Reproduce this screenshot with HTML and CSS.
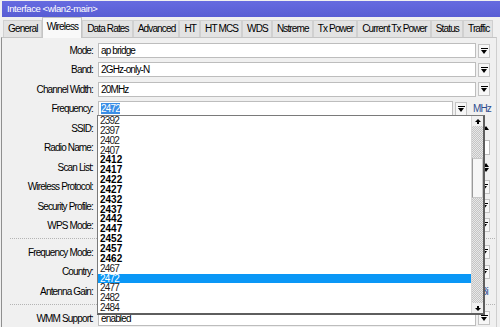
FILE: index.html
```html
<!DOCTYPE html>
<html lang="en">
<head>
    <meta charset="UTF-8">
    <meta name="viewport" content="width=device-width, initial-scale=1.0">
    <title>Interface &lt;wlan2-main&gt;</title>
    <link rel="stylesheet" href="styles.css">
</head>
<body>
    <div class="window">
        <div class="titlebar">Interface &lt;wlan2-main&gt;</div>

        <div class="tabs">
            <div class="tab">General</div>
            <div class="tab active">Wireless</div>
            <div class="tab">Data Rates</div>
            <div class="tab">Advanced</div>
            <div class="tab">HT</div>
            <div class="tab">HT MCS</div>
            <div class="tab">WDS</div>
            <div class="tab">Nstreme</div>
            <div class="tab">Tx Power</div>
            <div class="tab">Current Tx Power</div>
            <div class="tab">Status</div>
            <div class="tab">Traffic</div>
        </div>

        <div class="panel">
            <div class="form">
                <div class="row">
                    <span class="label">Mode:</span>
                    <div class="box">ap bridge</div>
                    <span class="btn drop"></span>
                </div>
                <div class="row">
                    <span class="label">Band:</span>
                    <div class="box">2GHz-only-N</div>
                    <span class="btn drop"></span>
                </div>
                <div class="row">
                    <span class="label">Channel Width:</span>
                    <div class="box">20MHz</div>
                    <span class="btn drop"></span>
                </div>
                <div class="row">
                    <span class="label">Frequency:</span>
                    <div class="box"><span class="sel">2472</span></div>
                    <span class="btn drop"></span>
                    <span class="unit wide">MHz</span>
                </div>
                <div class="row">
                    <span class="label">SSID:</span>
                    <div class="box"></div>
                    <span class="icon up-only"></span>
                </div>
                <div class="row">
                    <span class="label">Radio Name:</span>
                    <div class="box"></div>
                </div>
                <div class="row">
                    <span class="label">Scan List:</span>
                    <div class="box"></div>
                    <span class="icon updown"></span>
                </div>
                <div class="row">
                    <span class="label">Wireless Protocol:</span>
                    <div class="box"></div>
                    <span class="btn drop"></span>
                </div>
                <div class="row">
                    <span class="label">Security Profile:</span>
                    <div class="box"></div>
                    <span class="btn drop"></span>
                </div>
                <div class="row">
                    <span class="label">WPS Mode:</span>
                    <div class="box"></div>
                    <span class="btn drop"></span>
                </div>

                <div class="separator"></div>

                <div class="row">
                    <span class="label">Frequency Mode:</span>
                    <div class="box"></div>
                    <span class="btn drop"></span>
                </div>
                <div class="row">
                    <span class="label">Country:</span>
                    <div class="box"></div>
                    <span class="btn drop"></span>
                </div>
                <div class="row">
                    <span class="label">Antenna Gain:</span>
                    <div class="box"></div>
                    <span class="unit">dBi</span>
                </div>

                <div class="separator"></div>

                <div class="row">
                    <span class="label">WMM Support:</span>
                    <div class="box">enabled</div>
                    <span class="btn drop"></span>
                </div>
            </div>

            <!-- open frequency list -->
            <div class="freq-list">
                <div class="items">
                    <div class="item">2392</div>
                    <div class="item">2397</div>
                    <div class="item">2402</div>
                    <div class="item">2407</div>
                    <div class="item bold">2412</div>
                    <div class="item bold">2417</div>
                    <div class="item bold">2422</div>
                    <div class="item bold">2427</div>
                    <div class="item bold">2432</div>
                    <div class="item bold">2437</div>
                    <div class="item bold">2442</div>
                    <div class="item bold">2447</div>
                    <div class="item bold">2452</div>
                    <div class="item bold">2457</div>
                    <div class="item bold">2462</div>
                    <div class="item">2467</div>
                    <div class="item selected">2472</div>
                    <div class="item">2477</div>
                    <div class="item">2482</div>
                    <div class="item">2484</div>
                </div>
                <div class="scrollbar">
                    <div class="sb-btn sb-up"></div>
                    <div class="sb-track">
                        <div class="sb-thumb"></div>
                    </div>
                    <div class="sb-btn sb-down"></div>
                </div>
            </div>
        </div>
    </div>
</body>
</html>
```

FILE: styles.css
```css
body {
    margin: 0;
    background: #f0f0f0;
    font-family: "Liberation Sans", Arial, sans-serif;
    font-size: 10px;
    letter-spacing: -0.85px;
    color: #000;
}
.window {
    width: 500px;
    height: 327px;
    overflow: hidden;
    padding-left: 1px;
    box-sizing: border-box;
}
.titlebar {
    margin: 1px 0 0 1px;
    height: 16px;
    line-height: 16px;
    padding-left: 5px;
    background: linear-gradient(#666be0, #585dd4);
    color: #fff;
    font-size: 9.5px;
    letter-spacing: -0.4px;
}

/* tabs */
.tabs {
    display: flex;
    align-items: flex-end;
    height: 20px;
    padding-left: 2px;
}
.tab {
    height: 16px;
    line-height: 16px;
    padding: 0 3px 0 4px;
    background: #e3e3e3;
    border: 1px solid #d0d0d0;
    border-bottom: none;
    white-space: nowrap;
}
.tab.active {
    height: 20px;
    line-height: 18px;
    margin-bottom: -1px;
    background: #f9f9f9;
    border-color: #c4c4c4;
    position: relative;
    z-index: 1;
}

/* panel */
.panel {
    position: relative;
    margin-right: 3px;
    height: 300px;
    border-top: 1px solid #c4c4c4;
    border-left: 1px solid #8f8f8f;
    border-right: 1px solid #cfcfcf;
    padding-right: 6px;
}
.form {
    display: flex;
    flex-direction: column;
    gap: 4.45px;
    padding-top: 5px;
}
.row {
    display: flex;
    align-items: center;
    height: 15px;
}
.label {
    width: 91px;
    margin-right: 5px;
    text-align: right;
    white-space: nowrap;
}
.box {
    flex: 1;
    height: 15px;
    line-height: 13px;
    padding-left: 2px;
    box-sizing: border-box;
    background: #fff;
    border: 1px solid #bdbdbd;
}
.sel {
    background: #3a8ee6;
    color: #fff;
}
.btn {
    width: 12px;
    height: 14px;
    margin-left: 2px;
    box-sizing: border-box;
    background: #f7f7f7;
    border: 1px solid #c4c4c4;
}
.drop {
    display: flex;
    flex-direction: column;
    align-items: center;
    justify-content: center;
}
.drop::before {
    content: "";
    width: 7px;
    height: 1px;
    background: #000;
}
.drop::after {
    content: "";
    margin-top: 1px;
    border-left: 3.5px solid transparent;
    border-right: 3.5px solid transparent;
    border-top: 4px solid #000;
}
.unit {
    width: 16px;
    margin-left: 2px;
    padding-left: 2px;
    box-sizing: border-box;
    color: #2d4d8f;
    white-space: nowrap;
}
.unit.wide {
    width: 22px;
    margin-left: 1px;
    padding-left: 5px;
}
.icon {
    width: 12px;
    margin-left: 2px;
    display: flex;
    flex-direction: column;
    align-items: center;
    justify-content: center;
    padding-left: 4px;
    box-sizing: border-box;
}
.up-only::before,
.updown::before {
    content: "";
    border-left: 3.5px solid transparent;
    border-right: 3.5px solid transparent;
    border-bottom: 4px solid #000;
}
.updown::after {
    content: "";
    margin-top: 1px;
    border-left: 3.5px solid transparent;
    border-right: 3.5px solid transparent;
    border-top: 4px solid #000;
}
.separator {
    height: 0;
    margin: 1px -5px 1px 8px;
    border-top: 1px dotted #b4b4b4;
}

/* dropdown list */
.freq-list {
    position: absolute;
    top: 77px;
    left: 95px;
    width: 385px;
    height: 197px;
    display: flex;
    background: #fff;
    border-top: 1px solid #7a7a7a;
    border-left: 1px solid #7a7a7a;
    border-right: 2px solid #5e5e5e;
    border-bottom: 2px solid #5e5e5e;
}
.items {
    flex: 1;
}
.item {
    height: 9.85px;
    line-height: 10px;
    padding-left: 2px;
    color: #222;
}
.item.bold {
    font-weight: bold;
    letter-spacing: 0;
    color: #000;
}
.item.selected {
    background: #0a97f6;
    color: #fff;
}
.scrollbar {
    width: 12px;
    display: flex;
    flex-direction: column;
    border-left: 1px solid #d6d6d6;
    box-sizing: border-box;
}
.sb-btn {
    height: 10px;
    background: #f0f0f0;
    display: flex;
    flex-direction: column;
    align-items: center;
    justify-content: center;
}
.sb-up::before {
    content: "";
    border-left: 3px solid transparent;
    border-right: 3px solid transparent;
    border-bottom: 3px solid #000;
}
.sb-up::after {
    content: "";
    width: 2px;
    height: 2px;
    background: #000;
}
.sb-down::before {
    content: "";
    width: 2px;
    height: 2px;
    background: #000;
}
.sb-down::after {
    content: "";
    border-left: 3px solid transparent;
    border-right: 3px solid transparent;
    border-top: 3px solid #000;
}
.sb-track {
    flex: 1;
    background: repeating-conic-gradient(#c4c4c4 0 25%, #e8e8e8 0 50%) 0 0 / 2px 2px;
}
.sb-thumb {
    margin-top: 32px;
    height: 40px;
    box-sizing: border-box;
    background: #f6f6f6;
    border: 1px solid #c8c8c8;
    border-left-color: #9a9a9a;
}
```
